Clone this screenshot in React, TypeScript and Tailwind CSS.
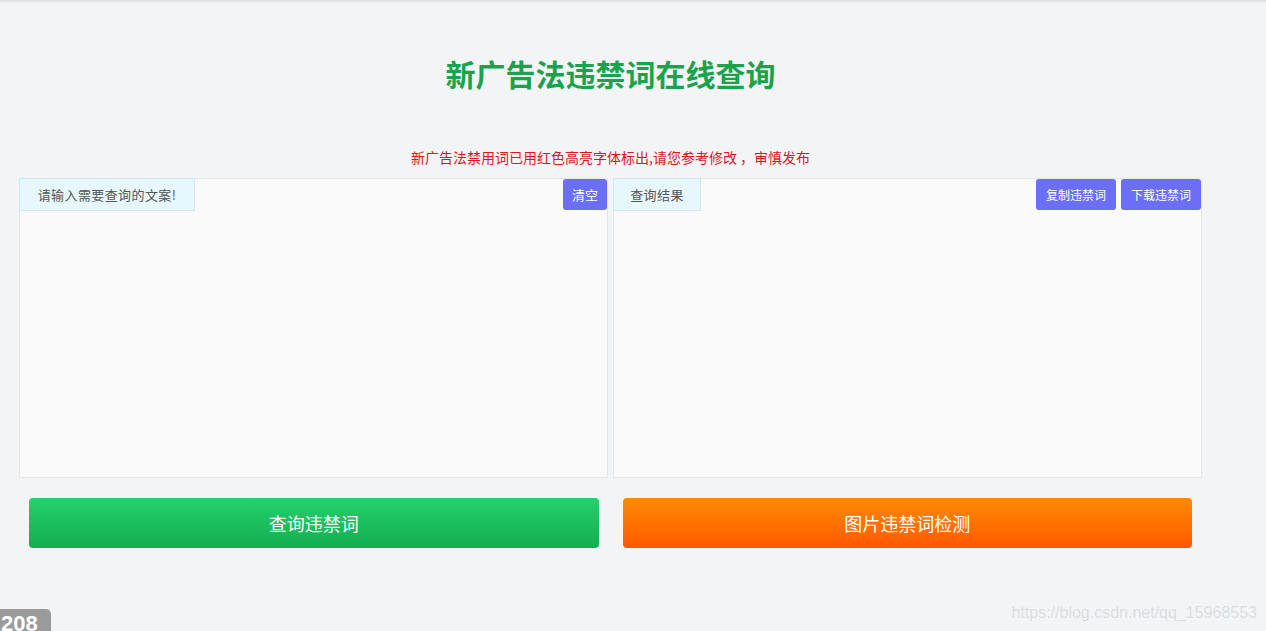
import React, { useState } from 'react'

const font = '"Microsoft YaHei", "Noto Sans CJK SC", "Liberation Sans", sans-serif'

export default function App() {
  const [text, setText] = useState('')

  return (
    <div
      className="relative w-[1266px] h-[631px] overflow-hidden bg-[#f3f4f6]"
      style={{ fontFamily: font }}
    >
      {/* top header shadow */}
      <div className="h-[3px] bg-gradient-to-b from-[#d9dadc] to-[#f3f4f6]" />

      <h1 className="mt-[52px] text-center text-[30px] leading-[36px] font-bold text-[#1ba24c] pr-[45px]">
        新广告法违禁词在线查询
      </h1>

      <p className="mt-[58px] text-center text-[14px] leading-[16px] text-[#e0141e] pr-[45px]">
        新广告法禁用词已用红色高亮字体标出,请您参考修改 ，审慎发布
      </p>

      <div className="ml-[19px] w-[1183px] mt-[13px]">
        {/* input / result panels */}
        <div className="flex gap-[5px] h-[300px]">
          <div className="flex-1 flex flex-col bg-[#fafafa] border border-[#e6e6e6]">
            <div className="flex justify-between items-start">
              <span className="mt-[-1px] ml-[-1px] h-[33px] w-[176px] flex items-center justify-center bg-[#e6f8fd] border border-[#cde9f2] text-[13px] tracking-[0.4px] text-[#555]">
                请输入需要查询的文案!
              </span>
              <button className="h-[31px] w-[44px] rounded-[3px] bg-[#6b6ff5] text-white text-[13px]">
                清空
              </button>
            </div>
            <textarea
              value={text}
              onChange={(e) => setText(e.target.value)}
              className="flex-1 resize-none bg-transparent outline-none p-2 text-sm text-[#333]"
            />
          </div>

          <div className="flex-1 flex flex-col bg-[#fafafa] border border-[#e6e6e6]">
            <div className="flex justify-between items-start">
              <span className="mt-[-1px] ml-[-1px] h-[33px] w-[88px] flex items-center justify-center bg-[#e6f8fd] border border-[#cde9f2] text-[13px] tracking-[0.4px] text-[#555]">
                查询结果
              </span>
              <div className="flex gap-[5px]">
                <button className="h-[31px] w-[80px] rounded-[3px] bg-[#6b6ff5] text-white text-[12px]">
                  复制违禁词
                </button>
                <button className="h-[31px] w-[80px] rounded-[3px] bg-[#6b6ff5] text-white text-[12px]">
                  下载违禁词
                </button>
              </div>
            </div>
          </div>
        </div>

        {/* action buttons */}
        <div className="flex gap-[24px] px-[10px] mt-[20px]">
          <button className="flex-1 h-[50px] rounded-[4px] bg-gradient-to-b from-[#26d06d] to-[#11ae4f] text-white text-[18px]">
            查询违禁词
          </button>
          <button className="flex-1 h-[50px] rounded-[4px] bg-gradient-to-b from-[#ff8a05] to-[#ff5700] text-white text-[18px]">
            图片违禁词检测
          </button>
        </div>
      </div>

      {/* watermark */}
      <div
        className="absolute right-[9px] bottom-[8px] text-[16px] leading-[20px] text-[#d9dbde] [text-shadow:0_0_1px_#ffffff]"
        style={{ fontFamily: '"Liberation Sans", Arial, sans-serif' }}
      >
        https://blog.csdn.net/qq_15968553
      </div>

      {/* page counter badge */}
      <div
        className="absolute left-0 top-[609px] w-[51px] h-[30px] rounded-tr-[5px] bg-[#9b9b9b] text-white font-bold text-[22px] leading-[30px] pl-[1px] overflow-hidden"
        style={{ fontFamily: '"Liberation Sans", Arial, sans-serif' }}
      >
        208
      </div>
    </div>
  )
}
